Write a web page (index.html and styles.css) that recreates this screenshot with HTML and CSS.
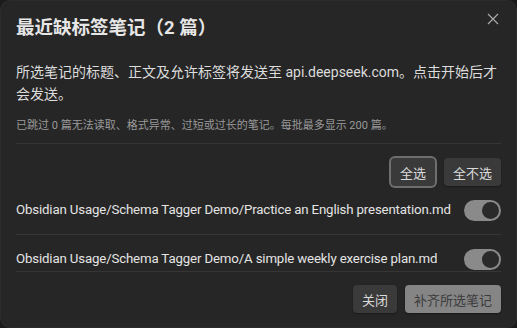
FILE: index.html
```html
<!DOCTYPE html>
<html lang="zh-CN">
<head>
    <meta charset="UTF-8">
    <meta name="viewport" content="width=device-width, initial-scale=1.0">
    <title>最近缺标签笔记</title>
    <link rel="stylesheet" href="styles.css">
</head>
<body>
<div class="modal">
    <button class="modal-close" aria-label="关闭">
        <svg width="12" height="12" viewBox="0 0 12 12">
            <path d="M1 1L11 11M11 1L1 11" stroke="currentColor" stroke-width="1.2" fill="none"/>
        </svg>
    </button>

    <h1 class="modal-title">最近缺标签笔记（2 篇）</h1>

    <div class="modal-content">
        <p class="desc">所选笔记的标题、正文及允许标签将发送至 api.deepseek.com。点击开始后才会发送。</p>
        <p class="hint">已跳过 0 篇无法读取、格式异常、过短或过长的笔记。每批最多显示 200 篇。</p>

        <!-- 批量选择 -->
        <div class="bulk-actions">
            <button class="btn is-focused">全选</button>
            <button class="btn">全不选</button>
        </div>

        <!-- 笔记列表 -->
        <div class="note-list">
            <div class="note-item">
                <span class="note-name">Obsidian Usage/Schema Tagger Demo/Practice an English presentation.md</span>
                <span class="toggle is-enabled"></span>
            </div>
            <div class="note-item">
                <span class="note-name">Obsidian Usage/Schema Tagger Demo/A simple weekly exercise plan.md</span>
                <span class="toggle is-enabled"></span>
            </div>
        </div>
    </div>

    <div class="modal-buttons">
        <button class="btn">关闭</button>
        <button class="btn btn-cta" disabled>补齐所选笔记</button>
    </div>
</div>
</body>
</html>
```

FILE: styles.css
```css
/* 基本样式 */
* {
    box-sizing: border-box;
}
body {
    margin: 0;
    background-color: #1b1b1b;
    font-family: Roboto, "Noto Sans CJK SC", sans-serif;
    color: #dadada;
}

/* 弹窗 */
.modal {
    position: relative;
    height: 328px;
    padding: 15px 15px 14px;
    background-color: #262626;
    border: 1px solid #2c2c2c;
    border-radius: 10px;
    display: flex;
    flex-direction: column;
}
.modal-close {
    position: absolute;
    top: 12px;
    right: 17px;
    padding: 0;
    border: none;
    background: none;
    color: #a8a8a8;
    display: flex;
}
.modal-title {
    margin: 0;
    font-size: 18.5px;
    line-height: 24px;
    font-weight: bold;
    color: #e6e6e6;
}

/* 说明文字 */
.desc {
    margin: 21px 0 0;
    font-size: 14px;
    line-height: 22px;
    color: #dcdcdc;
}
.hint {
    margin: 12px 0 0;
    padding-bottom: 8px;
    font-size: 11px;
    line-height: 18px;
    color: #9a9a9a;
    border-bottom: 1px solid #363636;
}

/* 按钮 */
.btn {
    height: 28px;
    padding: 0 9px;
    font-family: inherit;
    font-size: 13px;
    color: #dadada;
    background-color: #3a3a3a;
    border: none;
    border-radius: 4px;
    box-shadow: 0 1px 2px rgba(0, 0, 0, 0.35);
}
.btn.is-focused {
    box-shadow: 0 0 0 2px #6e6e6e;
}
.btn-cta {
    background-color: #858585;
    color: #3c3c3c;
}
.bulk-actions {
    margin-top: 14px;
    display: flex;
    justify-content: flex-end;
    gap: 9px;
}

/* 笔记列表 */
.note-list {
    height: 86px;
    overflow: hidden;
    border-bottom: 1px solid #363636;
}
.note-item {
    display: flex;
    align-items: center;
    justify-content: space-between;
    gap: 8px;
    padding: 12px 0;
    min-height: 48px;
}
.note-item + .note-item {
    border-top: 1px solid #363636;
}
.note-name {
    font-size: 13.25px;
    letter-spacing: -0.15px;
    line-height: 24px;
    color: #e4e4e4;
    white-space: nowrap;
    overflow: hidden;
    text-overflow: ellipsis;
}

/* 开关 */
.toggle {
    position: relative;
    flex-shrink: 0;
    width: 37px;
    height: 21px;
    border-radius: 11px;
    background-color: #8a8a8a;
}
.toggle::after {
    content: "";
    position: absolute;
    top: 2px;
    right: 2px;
    width: 17px;
    height: 17px;
    border-radius: 50%;
    background-color: #2a2a2a;
}

/* 底部按钮 */
.modal-buttons {
    margin-top: auto;
    display: flex;
    justify-content: flex-end;
    gap: 8px;
}
```
